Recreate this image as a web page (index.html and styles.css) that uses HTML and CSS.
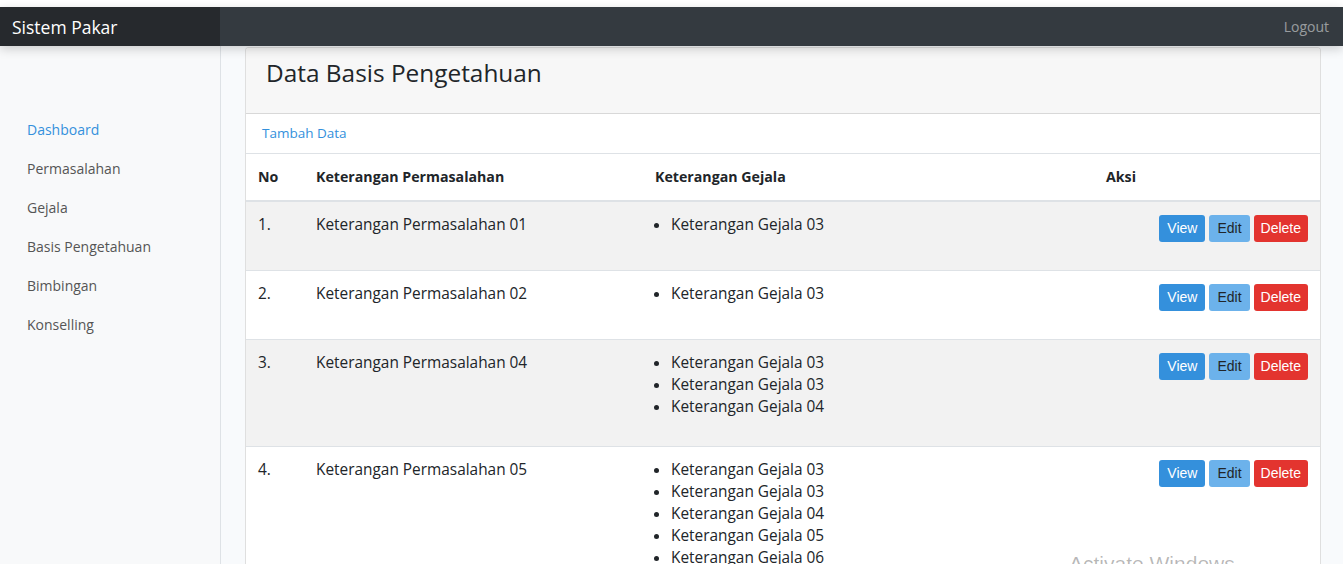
FILE: index.html
```html
<!DOCTYPE html>
<html lang="id">
<head>
<meta charset="utf-8">
<title>Sistem Pakar</title>
<link rel="stylesheet" href="styles.css">
</head>
<body>
<div class="top-strip"></div>
<nav class="navbar">
  <a class="brand" href="#">Sistem Pakar</a>
  <a class="logout" href="#">Logout</a>
</nav>
<div class="layout">
  <aside class="sidebar">
    <ul class="side-nav">
      <li><a class="side-link active" href="#">Dashboard</a></li>
      <li><a class="side-link" href="#">Permasalahan</a></li>
      <li><a class="side-link" href="#">Gejala</a></li>
      <li><a class="side-link" href="#">Basis Pengetahuan</a></li>
      <li><a class="side-link" href="#">Bimbingan</a></li>
      <li><a class="side-link" href="#">Konselling</a></li>
    </ul>
  </aside>
  <main class="main">
    <section class="card">
      <header class="card-header"><h3 class="card-title">Data Basis Pengetahuan</h3></header>
      <div class="card-tools"><a class="add-link" href="#">Tambah Data</a></div>
      <table class="table">
        <colgroup>
          <col class="c-no"><col class="c-perm"><col class="c-gej"><col>
        </colgroup>
        <thead>
          <tr><th>No</th><th>Keterangan Permasalahan</th><th>Keterangan Gejala</th><th>Aksi</th></tr>
        </thead>
        <tbody>
          <tr class="striped">
            <td>1.</td><td>Keterangan Permasalahan 01</td>
            <td><ul class="gejala"><li>Keterangan Gejala 03</li></ul></td>
            <td class="aksi"><div class="btns"><a class="btn btn-view" href="#">View</a><a class="btn btn-edit" href="#">Edit</a><a class="btn btn-del" href="#">Delete</a></div></td>
          </tr>
          <tr>
            <td>2.</td><td>Keterangan Permasalahan 02</td>
            <td><ul class="gejala"><li>Keterangan Gejala 03</li></ul></td>
            <td class="aksi"><div class="btns"><a class="btn btn-view" href="#">View</a><a class="btn btn-edit" href="#">Edit</a><a class="btn btn-del" href="#">Delete</a></div></td>
          </tr>
          <tr class="striped">
            <td>3.</td><td>Keterangan Permasalahan 04</td>
            <td><ul class="gejala"><li>Keterangan Gejala 03</li><li>Keterangan Gejala 03</li><li>Keterangan Gejala 04</li></ul></td>
            <td class="aksi"><div class="btns"><a class="btn btn-view" href="#">View</a><a class="btn btn-edit" href="#">Edit</a><a class="btn btn-del" href="#">Delete</a></div></td>
          </tr>
          <tr>
            <td>4.</td><td>Keterangan Permasalahan 05</td>
            <td><ul class="gejala"><li>Keterangan Gejala 03</li><li>Keterangan Gejala 03</li><li>Keterangan Gejala 04</li><li>Keterangan Gejala 05</li><li>Keterangan Gejala 06</li></ul></td>
            <td class="aksi"><div class="btns"><a class="btn btn-view" href="#">View</a><a class="btn btn-edit" href="#">Edit</a><a class="btn btn-del" href="#">Delete</a></div></td>
          </tr>
        </tbody>
      </table>
    </section>
  </main>
</div>
<div class="watermark">Activate Windows</div>
</body>
</html>
```
FILE: styles.css
```css
* { box-sizing: border-box; }
html, body { margin: 0; padding: 0; }
body {
  font-family: "Open Sans", "Noto Sans", sans-serif;
  font-size: 14px;
  line-height: 22px;
  color: #212529;
  background: #f8fafc;
  height: 564px;
  overflow: hidden;
  position: relative;
}
a { text-decoration: none; }
.top-strip { height: 7px; background: #fff; }
.navbar {
  display: flex;
  align-items: center;
  justify-content: space-between;
  height: 39px;
  background: #343a40;
  box-shadow: 0 3px 10px rgba(0,0,0,.18);
  position: relative;
  z-index: 2;
}
.brand {
  width: 220px;
  height: 100%;
  display: flex;
  align-items: center;
  padding-left: 12px;
  background: #26292d;
  color: #fff;
  font-size: 17.5px;
}
.logout {
  color: rgba(255,255,255,.5);
  font-size: 14px;
  margin-right: 14px;
}
.layout {
  display: flex;
  height: calc(564px - 46px);
}
.sidebar {
  width: 221px;
  flex: none;
  background: #f8f9fa;
  border-right: 1px solid #dee2e6;
  padding-top: 65px;
}
.side-nav { list-style: none; margin: 0; padding: 0; }
.side-link {
  display: block;
  padding: 8px 27px 9px;
  color: #555;
  font-size: 14px;
  line-height: 22px;
}
.side-link.active { color: #3490dc; }
.main {
  flex: 1;
  padding: 1px 22px 0 24px;
}
.card {
  background: #fff;
  border: 1px solid rgba(0,0,0,.125);
  border-radius: 4px;
  overflow: hidden;
}
.card-header {
  background: #f7f7f7;
  border-bottom: 1px solid rgba(0,0,0,.125);
  padding: 10px 20px 26px;
}
.card-title {
  margin: 0;
  font-size: 24.4px;
  line-height: 29px;
  font-weight: 400;
}
.card-tools { padding: 8px 16px 9px; }
.add-link { color: #3490dc; font-size: 13.5px; }
.table {
  width: 100%;
  border-collapse: collapse;
  table-layout: fixed;
}
.c-no { width: 58px; }
.c-perm { width: 339px; }
.c-gej { width: 451px; }
.table th, .table td {
  padding: 12px;
  text-align: left;
  vertical-align: top;
  border-top: 1px solid #dee2e6;
}
.table td { font-size: 15.4px; }
.table th {
  font-weight: 700;
  font-size: 14.2px;
  border-bottom: 2px solid #dee2e6;
}
.table tr.striped td { background: #f2f2f2; }
.gejala {
  margin: 0 0 16px;
  padding-left: 16px;
}
.btns {
  display: flex;
  justify-content: flex-end;
  gap: 4px;
  margin: 1px 0 16px;
}
.btn {
  display: block;
  font-family: "Liberation Sans", Arial, sans-serif;
  font-size: 14px;
  line-height: 17px;
  padding: 5px 8px;
  border-radius: 3px;
  color: #fff;
}
.btn-view { background: #3490dc; }
.btn-edit { background: #6cb2eb; color: #212529; }
.btn-del { background: #e3342f; padding: 5px 7px; }
.watermark {
  position: absolute;
  left: 1069px;
  top: 553px;
  font-family: "Liberation Sans", Arial, sans-serif;
  font-size: 21px;
  color: rgba(0,0,0,.28);
}
```
